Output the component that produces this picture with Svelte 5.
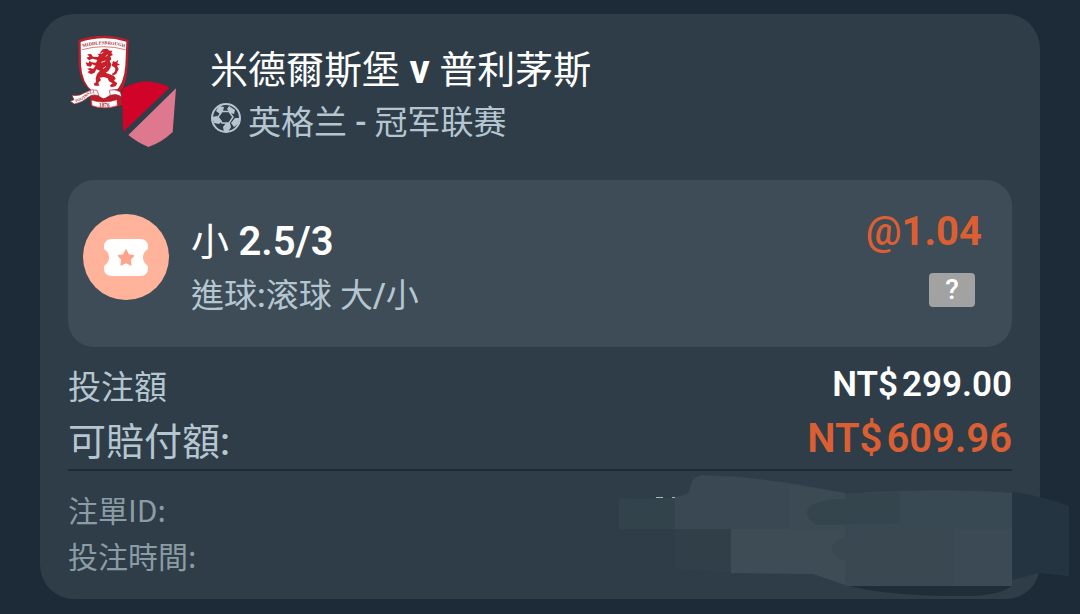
<script>
  const match = {
    home: '米德爾斯堡',
    away: '普利茅斯',
    country: '英格兰',
    league: '冠军联赛'
  };

  const bet = {
    pick: '小',
    line: '2.5/3',
    odds: '1.04',
    stake: '299.00',
    payout: '609.96'
  };
</script>

<main>
  <article class="ticket">
    <header class="match">
      <!-- club crests -->
      <svg class="crests" viewBox="24 30 330 339" aria-hidden="true">
        <path d="M55 45 Q130 20 206 45 L203 122 Q200 178 183 196 L186 240 Q132 258 92 242 L90 196 Q59 170 56 120 Z" fill="#b5202a" />
        <path d="M62 51 Q130 29 199 50 L196 122 Q192 178 164 201 Q145 214 131 221 Q110 210 98 199 Q66 174 63 120 Z" fill="#fff" />
        <path d="M66 74 Q131 56 196 74" fill="none" stroke="#c33941" stroke-width="2" />
        <path id="crest-top" d="M65 68 Q131 48 198 68" fill="none" />
        <text class="crest-name"><textPath href="#crest-top" startOffset="50%" text-anchor="middle">MIDDLESBROUGH</textPath></text>
        <!-- lion -->
        <path d="M122 80 L128 73 L141 71 L149 77 L157 77 L154 84 L159 90 L151 94 L154 103 L149 108 L154 118 L151 129 L145 138 L137 143 L149 148 L162 153 L167 160 L162 167 L172 175 L167 184 L153 187 L150 181 L158 175 L147 169 L143 160 L131 156 L119 158 L123 165 L115 173 L118 182 L104 182 L101 176 L108 172 L107 160 L111 147 L120 137 L109 133 L104 143 L93 148 L82 141 L90 137 L82 131 L91 129 L99 132 L107 122 L97 118 L92 125 L81 123 L77 112 L86 114 L88 107 L95 112 L108 113 L112 105 L97 101 L87 106 L79 98 L88 95 L82 88 L93 87 L99 95 L114 96 L117 91 L112 87 L120 86 Z" fill="#c81f2b" />
        <path d="M156 146 Q169 140 165 128 L155 122 L159 108 L167 111 L175 104 L172 115 L180 119 L171 122 L176 132 L169 146 L158 152" fill="#c81f2b" />
        <path d="M122 86 L130 82 M124 112 L136 108 M129 131 L138 124 M137 94 L143 90" fill="none" stroke="#f7dfdf" stroke-width="3" />
        <path d="M93 194 Q105 204 111 216 Q133 227 153 212 L156 194 L181 191 L184 212 L169 205 L166 221 Q134 238 99 222 Z" fill="#b71e29" />
        <path d="M36 211 Q58 215 79 201 Q98 190 111 196 L117 213 Q99 205 84 217 Q68 232 43 237 L31 229 L42 224 Z" fill="#fff" stroke="#b52b34" stroke-width="2" />
        <path d="M148 196 Q164 190 181 201 L185 215 Q168 204 151 211 Z" fill="#fff" stroke="#b52b34" stroke-width="2" />
        <path d="M94 225 Q130 238 171 224 L172 242 Q133 255 96 242 Z" fill="#fff" stroke="#b52b34" stroke-width="2" />
        <path id="crest-ribbon" d="M47 232 Q72 225 87 208 Q98 201 113 207" fill="none" />
        <text class="crest-club"><textPath href="#crest-ribbon">FOOTBALL</textPath></text>
        <text class="crest-year" x="133" y="246" text-anchor="middle">1876</text>
        <path d="M188 190 Q224 170 264 169 Q300 173 329 188 L190 320 L185 206 Z" fill="#d20329" />
        <path d="M348 190 L338 321 Q306 352 265 366 Q230 351 205 330 Z" fill="#de788e" />
      </svg>

      <div class="match-text">
        <h1>{match.home} <b>v</b> {match.away}</h1>
        <p class="league">
          <svg class="ball" viewBox="0 0 32 32" aria-hidden="true">
            <circle cx="16" cy="16" r="14" fill="none" stroke="currentColor" stroke-width="2" />
            <path d="M12 9.500 H19 L23 15 L19 21 H12 L8 15 Z" fill="none" stroke="currentColor" stroke-width="1.500" />
            <path d="M9 4 L14 5 L13 9 L10 12 L6 9 Z M19 4 L25 8 L24 12 L20 11 L17 7 Z M2 15 L7 14 L12 19 L9 22 L4 21 Z M30 16 L25 16 L21 21 L24 25 L28 22 Z M16 21 H20 L21 25 L18 30 H14 L13 25 Z" fill="currentColor" />
          </svg>
          <span>{match.country} <b>-</b> {match.league}</span>
        </p>
      </div>
    </header>

    <section class="pick">
      <svg class="coupon" viewBox="0 0 86 86" aria-hidden="true">
        <circle cx="43" cy="43" r="43" fill="#ffb39b" />
        <path d="M29 25 H57 Q65 25 65 33 V35 Q60 38 60 43.5 Q60 49 65 52 V54 Q65 62 57 62 H29 Q21 62 21 54 V52 Q26 49 26 43.5 Q26 38 21 35 V33 Q21 25 29 25 Z" fill="#fff" />
        <path d="M43 36 L45.5 41 L50.5 41.8 L47 45.4 L47.8 50.8 L43 48.4 L38.2 50.8 L39 45.4 L35.5 41.8 L40.5 41 Z" fill="#fda58a" stroke="#fda58a" stroke-width="1.5" stroke-linejoin="round" />
      </svg>

      <div class="pick-text">
        <h2>{bet.pick} <b>{bet.line}</b></h2>
        <p>進球<b>:</b>滚球 大<b>/</b>小</p>
      </div>

      <div class="pick-side">
        <span class="odds">@<b>{bet.odds}</b></span>
        <button class="help" type="button">?</button>
      </div>
    </section>

    <dl class="amounts">
      <div class="row">
        <dt>投注額</dt>
        <dd><span>NT$</span><span>{bet.stake}</span></dd>
      </div>
      <div class="row payout">
        <dt>可賠付額<b>:</b></dt>
        <dd><span>NT$</span><span>{bet.payout}</span></dd>
      </div>
    </dl>

    <dl class="details">
      <div class="row"><dt>注單ID:</dt></div>
      <div class="row"><dt>投注時間:</dt></div>
    </dl>

    <!-- mosaic brush over the private values -->
    <svg class="mosaic" viewBox="600 460 480 154" aria-hidden="true">
      <path d="M845 585 H1012 Q1005 594 973 596 Q890 597 845 585 Z" fill="#1f2f39" />
      <path d="M1012 492 Q1042 496 1069 506 V576 L1038 573 L1012 580 Z" fill="#243541" />
      <path d="M619 498 Q650 500 675 497 V529 H619 Z" fill="#33434b" />
      <path d="M675 529 H731 V573 L675 569 Z" fill="#313f48" />
      <path d="M675 497 Q690 495 690 489 Q691 475 704 475 L740 477 Q790 482 845 493 V529 H675 Z" fill="#394852" />
      <path d="M731 529 H845 V585 L813 574 L731 573 Z" fill="#3d4c55" />
      <path d="M789 485 L845 493 V529 H789 Z" fill="#3b4a53" />
      <path d="M845 494 Q940 487 1012 493 V586 H845 Z" fill="#394953" />
      <path d="M845 494 L900 492 V523 L820 525 Q807 522 807 512 Q808 500 845 499 Z" fill="#35454e" />
      <path d="M845 532 Q900 526 955 528 V586 H845 V560 Q832 557 832 547 Q834 539 845 538 Z" fill="#394851" />
      <path d="M955 529 H1012 V586 H955 Z" fill="#3b4a54" />
      <path d="M656 497.5 H663 M672 497.5 H675" stroke="#aab8c1" stroke-width="1" />
    </svg>
  </article>
</main>

<style>
  :global(body) {
    margin: 0;
    background: #1c2b37;
  }

  main {
    padding: 14px 40px 15px;
    font-family: Roboto, "Noto Sans CJK TC", sans-serif;
    color: #fff;
  }

  h1, h2, p, dl, dd {
    margin: 0;
    font-weight: 400;
  }

  b {
    font-weight: 500;
  }

  .ticket {
    position: relative;
    padding: 21px 28px 21px;
    border-radius: 34px;
    background: #2e3d47;
  }

  .match {
    display: flex;
    align-items: flex-end;
    gap: 32px;
    margin-bottom: 32px;
  }

  .crests {
    flex: none;
    width: 110px;
    height: 113px;
  }

  .crest-name, .crest-club, .crest-year {
    font-family: "Liberation Serif", serif;
    font-weight: 700;
    fill: #a52f36;
  }

  .crest-name {
    font-size: 14px;
  }

  .crest-club {
    font-size: 12px;
  }

  .crest-year {
    font-size: 16px;
  }

  h1, h2 {
    font-size: 38px;
    line-height: 56px;
  }

  h1 b {
    font-size: 40px;
    font-weight: 700;
  }

  h2 b {
    font-size: 40px;
    font-weight: 600;
  }

  .league {
    display: flex;
    align-items: center;
    gap: 6px;
    font-family: Roboto, "Noto Sans CJK SC", sans-serif;
    font-size: 33px;
    line-height: 50px;
    color: #b5c6d1;
  }

  .ball {
    width: 32px;
    height: 32px;
    margin-bottom: 10px;
  }

  .pick {
    display: flex;
    align-items: flex-start;
    padding: 34px 30px 25px 15px;
    border-radius: 26px;
    background: #3d4c56;
  }

  .coupon {
    flex: none;
    width: 86px;
    height: 86px;
    margin-right: 22px;
  }

  .pick-text {
    flex: 1;
  }

  .pick-text p {
    font-size: 33px;
    line-height: 52px;
    color: #b5c6d1;
  }

  .pick-side {
    display: flex;
    flex-direction: column;
    align-items: flex-end;
    gap: 23px;
  }

  .odds {
    font-size: 40px;
    font-weight: 500;
    line-height: 36px;
    color: #dc5f33;
  }

  .odds b {
    font-weight: 700;
  }

  .help {
    width: 46px;
    height: 34px;
    margin-right: 7px;
    padding: 0;
    border: 0;
    border-radius: 4px;
    background: #a2a2a2;
    color: #fff;
    font-family: inherit;
    font-size: 28px;
    font-weight: 500;
    line-height: 34px;
  }

  .amounts {
    padding-top: 14px;
    border-bottom: 2px solid #1c2b37;
  }

  .row {
    display: flex;
    justify-content: space-between;
    font-size: 33px;
    line-height: 54px;
    color: #b5c6d1;
  }

  .row dd {
    display: flex;
    gap: 4px;
    font-size: 35px;
    font-weight: 600;
    line-height: 48px;
    color: #fff;
  }

  .payout {
    font-size: 38px;
  }

  .payout dd {
    font-size: 40px;
    color: #dc5f33;
  }

  .details {
    padding-top: 15px;
  }

  .details .row {
    font-family: "Noto Sans CJK TC", sans-serif;
    font-size: 30px;
    line-height: 46px;
    color: #8b9ca5;
  }

  .mosaic {
    position: absolute;
    right: -40px;
    bottom: -15px;
    width: 480px;
    height: 154px;
    pointer-events: none;
  }
</style>
